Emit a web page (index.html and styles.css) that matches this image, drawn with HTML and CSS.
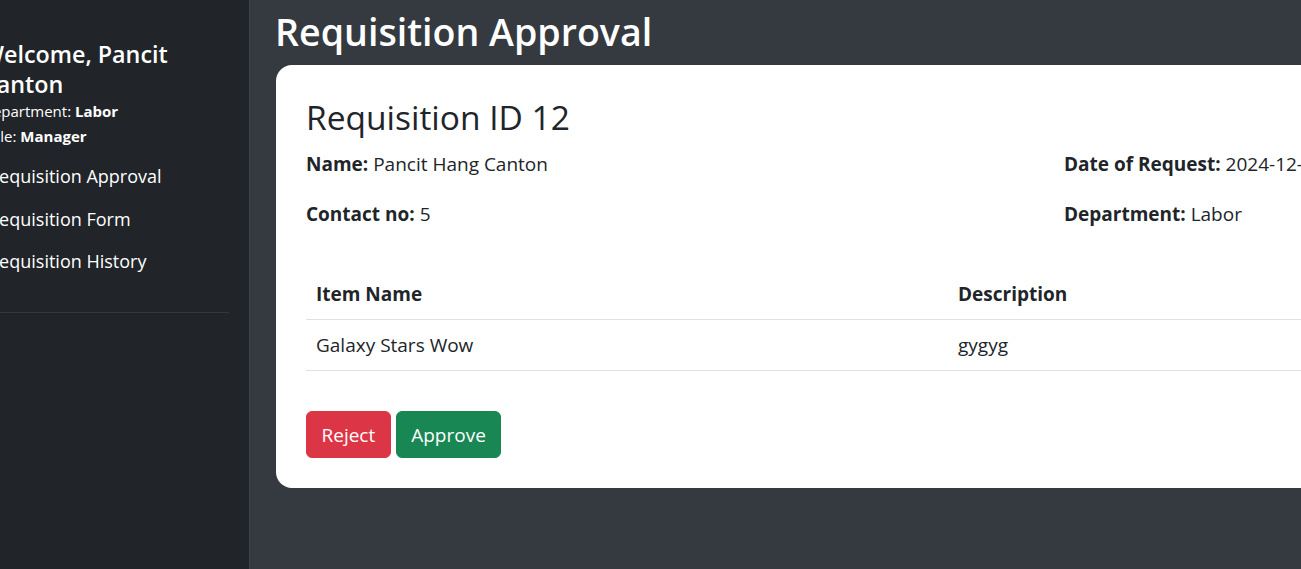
FILE: index.html
```html
<!DOCTYPE html>
<html lang="en">
<head>
<meta charset="utf-8">
<title>Requisition Approval</title>
<link rel="stylesheet" href="styles.css">
</head>
<body>
<div class="layout">
  <aside class="sidebar">
    <div class="sidebar-inner">
      <h4 class="welcome">Welcome, Pancit Canton</h4>
      <p class="meta">Department: <strong>Labor</strong></p>
      <p class="meta">Role: <strong>Manager</strong></p>
      <nav class="side-nav">
        <a class="side-link" href="#">Requisition Approval</a>
        <a class="side-link" href="#">Requisition Form</a>
        <a class="side-link" href="#">Requisition History</a>
      </nav>
    </div>
    <hr class="side-divider">
  </aside>
  <main class="main">
    <h1 class="page-title">Requisition Approval</h1>
    <section class="card">
      <h2 class="card-title">Requisition ID 12</h2>
      <div class="info-grid">
        <p class="info"><strong>Name:</strong> Pancit Hang Canton</p>
        <p class="info"><strong>Date of Request:</strong> 2024-12-10</p>
        <p class="info"><strong>Contact no:</strong> 5</p>
        <p class="info"><strong>Department:</strong> Labor</p>
      </div>
      <table class="items">
        <thead>
          <tr><th class="col-name">Item Name</th><th class="col-desc">Description</th><th>Quantity</th></tr>
        </thead>
        <tbody>
          <tr><td>Galaxy Stars Wow</td><td>gygyg</td><td>1</td></tr>
        </tbody>
      </table>
      <div class="actions">
        <button class="btn btn-reject" type="button">Reject</button>
        <button class="btn btn-approve" type="button">Approve</button>
      </div>
    </section>
  </main>
</div>
</body>
</html>
```
FILE: styles.css
```css
* { box-sizing: border-box; }
html, body { margin: 0; padding: 0; }
body {
  font-family: "Open Sans", "Noto Sans", sans-serif;
  color: #212529;
  background: #343a40;
  overflow: hidden;
  width: 1301px;
  height: 569px;
}
.layout {
  display: flex;
  min-height: 569px;
  width: 1301px;
  overflow: hidden;
}
.sidebar {
  flex: 0 0 250px;
  width: 250px;
  background: #212529;
  border-right: 1px solid #3f444a;
  color: #fff;
  padding-top: 39px;
  overflow: hidden;
}
.sidebar-inner {
  margin-left: -18px;
  width: 250px;
}
.welcome {
  margin: 0;
  font-size: 23.3px;
  line-height: 30px;
  font-weight: 600;
}
.meta {
  margin: 0;
  font-size: 15px;
  line-height: 25px;
}
.meta strong { font-weight: 700; }
.side-nav {
  display: flex;
  flex-direction: column;
  margin-top: 6px;
}
.side-link {
  color: #fff;
  text-decoration: none;
  font-size: 18px;
  line-height: 30px;
  padding: 6.25px 0 6.25px 6px;
}
.side-divider {
  margin: 29px 20px 0 0;
  border: 0;
  border-top: 1px solid #34383c;
}
.main {
  flex: 1 1 auto;
  min-width: 0;
  padding: 8px 0 0 25px;
  overflow: hidden;
}
.page-title {
  margin: 0 0 9px;
  font-size: 37.6px;
  line-height: 48px;
  font-weight: 600;
  color: #fff;
  white-space: nowrap;
}
.card {
  width: 1552px;
  margin-left: 1px;
  background: #fff;
  border-radius: 16px;
  padding: 30px;
}
.card-title {
  margin: 2px 0 12px;
  font-size: 33.5px;
  line-height: 40px;
  font-weight: 500;
}
.info-grid {
  display: grid;
  grid-template-columns: 758px 1fr;
  margin-bottom: 20px;
}
.info {
  margin: 0 0 20px;
  font-size: 19px;
  line-height: 30px;
}
.info strong { font-weight: 700; }
.items {
  width: 100%;
  border-collapse: collapse;
  margin-bottom: 40px;
}
.items th, .items td {
  text-align: left;
  padding: 10px;
  font-size: 19px;
  line-height: 30px;
  border-bottom: 1px solid #dee2e6;
}
.items th { font-weight: 700; }
.col-name { width: 642px; }
.col-desc { width: 600px; }
.actions {
  display: flex;
  gap: 5px;
}
.btn {
  font-family: inherit;
  font-size: 19px;
  line-height: 30px;
  padding: 7.5px 14.5px;
  border: 1px solid transparent;
  border-radius: 6px;
  color: #fff;
  cursor: pointer;
}
.btn-reject { background: #dc3545; border-color: #dc3545; }
.btn-approve { background: #198754; border-color: #198754; }
```
